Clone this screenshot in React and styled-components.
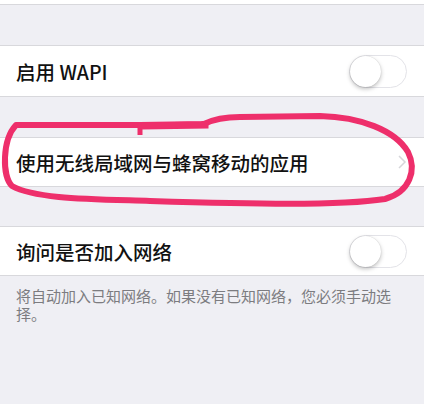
import React from "react";
import styled, { createGlobalStyle } from "styled-components";

const GlobalStyle = createGlobalStyle`
  html, body {
    margin: 0;
    padding: 0;
    background: #ffffff;
  }
  body {
    font-family: "Noto Sans CJK SC", "Noto Sans", sans-serif;
  }
`;

const Page = styled.div`
  display: flex;
  width: 432px;
  height: 404px;
  overflow: hidden;
`;

const Screen = styled.div`
  position: relative;
  width: 424px;
  height: 404px;
  background: #efeff4;
  display: flex;
  flex-direction: column;
`;

const Edge = styled.div`
  flex: 1;
  background: #ffffff;
`;

const TopCell = styled.div`
  height: 4px;
  background: #ffffff;
  border-bottom: 1px solid #d8d8dc;
`;

const Group = styled.div`
  margin-top: ${(p) => p.$gap}px;
  background: #ffffff;
  border-top: 1px solid #d8d8dc;
  border-bottom: 1px solid #d8d8dc;
`;

const Row = styled.div`
  height: ${(p) => p.$h}px;
  display: flex;
  align-items: center;
  justify-content: space-between;
  padding: 0 17px 0 16px;
`;

const Label = styled.span`
  font-size: 19.5px;
  font-weight: 500;
  color: #111111;
  white-space: nowrap;
`;

const Switch = styled.div`
  position: relative;
  width: 58px;
  height: 33px;
  border-radius: 17px;
  border: 1.5px solid #e3e3e8;
  background: #ffffff;
  box-sizing: border-box;
`;

const Knob = styled.div`
  position: absolute;
  left: 0;
  top: 0;
  width: 31px;
  height: 31px;
  border-radius: 50%;
  background: #ffffff;
  box-shadow: 0 2px 4px rgba(0, 0, 0, 0.25), 0 0 1px rgba(0, 0, 0, 0.2);
`;

const Footer = styled.p`
  margin: 0;
  padding: 11px 20px 0 16px;
  font-size: 15px;
  line-height: 18px;
  color: #7c7c80;
`;

const Marker = styled.svg`
  position: absolute;
  left: 0;
  top: 0;
  pointer-events: none;
`;

const Toggle = () => (
  <Switch>
    <Knob />
  </Switch>
);

const Chevron = () => (
  <svg width="10" height="16" viewBox="0 0 10 16">
    <path d="M2 2 L8 8 L2 14" fill="none" stroke="#d6d6da" strokeWidth="1.5" />
  </svg>
);

export default function App() {
  return (
    <>
      <GlobalStyle />
      <Page>
        <Screen>
          <TopCell />
          <Group $gap={40}>
            <Row $h={50}>
              <Label>启用 WAPI</Label>
              <Toggle />
            </Row>
          </Group>
          <Group $gap={40}>
            <Row $h={48}>
              <Label>使用无线局域网与蜂窝移动的应用</Label>
              <Chevron />
            </Row>
          </Group>
          <Group $gap={39}>
            <Row $h={48}>
              <Label>询问是否加入网络</Label>
              <Toggle />
            </Row>
          </Group>
          <Footer>将自动加入已知网络。如果没有已知网络，您必须手动选择。</Footer>

          {/* hand-drawn highlight over the middle row */}
          <Marker width="424" height="404" viewBox="0 0 424 404">
            <path
              d="M16 125 L140 125 L204 124 C 214 119, 226 117, 240 117 L 320 116 C 360 117, 395 130, 408 152 C 417 170, 410 192, 385 199 C 340 206, 250 204, 150 201 C 90 199, 35 199, 12 186 C 2 176, 2 140, 16 125 Z"
              fill="none"
              stroke="#ee2f6b"
              strokeWidth="6"
              strokeLinejoin="round"
            />
            <path d="M140 124 L140 135" stroke="#ee2f6b" strokeWidth="5" />
            <path d="M142 126 L205 125 L205 121" fill="none" stroke="#ee2f6b" strokeWidth="7" />
          </Marker>
        </Screen>
        <Edge />
      </Page>
    </>
  );
}
